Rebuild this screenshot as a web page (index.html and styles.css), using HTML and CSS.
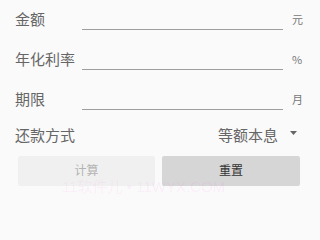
FILE: index.html
```html
<!DOCTYPE html>
<html lang="zh">
<head>
<meta charset="utf-8">
<link rel="stylesheet" href="styles.css">
</head>
<body>
<div class="page">
  <div class="row">
    <div class="label">金额</div>
    <div class="field"></div>
    <div class="unit">元</div>
  </div>
  <div class="row">
    <div class="label">年化利率</div>
    <div class="field"></div>
    <div class="unit">%</div>
  </div>
  <div class="row">
    <div class="label">期限</div>
    <div class="field"></div>
    <div class="unit">月</div>
  </div>
  <div class="row-select">
    <div class="label">还款方式</div>
    <div class="select">
      <span class="select-text">等额本息</span>
      <svg class="caret" width="7" height="4" viewBox="0 0 7 4"><polygon points="0,0 7,0 3.5,4" fill="#666"/></svg>
    </div>
  </div>
  <div class="buttons">
    <div class="btn btn-calc">计算</div>
    <div class="btn btn-reset">重置</div>
  </div>
  <div class="watermark">11软件儿 • 11WYX.COM</div>
</div>
</body>
</html>
```

FILE: styles.css
```css
html, body {
  margin: 0;
  padding: 0;
  background: #fafafa;
}
.page {
  position: relative;
  width: 315px;
  height: 204px;
  font-family: "Noto Sans CJK SC", "Noto Sans", sans-serif;
  color: #666;
}
.row {
  display: flex;
  align-items: flex-end;
  height: 30px;
  margin-bottom: 10px;
  padding-left: 15px;
}
.label {
  width: 67px;
  font-size: 15px;
  line-height: 20px;
  margin-bottom: 1px;
  color: #666;
}
.field {
  width: 201px;
  height: 29px;
  border-bottom: 1px solid #9e9e9e;
}
.unit {
  margin-left: 9px;
  font-size: 11px;
  line-height: 16px;
  margin-bottom: 3px;
  color: #777;
}
.row-select {
  display: flex;
  align-items: center;
  justify-content: space-between;
  height: 30px;
  margin-top: 2px;
  padding: 0 18px 0 15px;
}
.select {
  display: flex;
  align-items: center;
  gap: 12px;
}
.select-text {
  font-size: 15px;
  line-height: 20px;
  color: #666;
}
.caret {
  display: block;
  margin-top: -5px;
}
.buttons {
  display: flex;
  gap: 7px;
  margin-top: 6px;
  padding: 0 15px 0 18px;
}
.btn {
  height: 30px;
  display: flex;
  align-items: center;
  justify-content: center;
  font-size: 12px;
  line-height: 12px;
  padding-bottom: 2px;
  box-sizing: border-box;
  border-radius: 2px;
}
.btn-calc {
  width: 137px;
  background: #f0f0f0;
  color: #b3b3b3;
}
.btn-reset {
  width: 138px;
  background: #d6d6d6;
  color: #333;
}
.watermark {
  position: absolute;
  left: 62px;
  top: 182px;
  font-family: "Liberation Sans", Arial, "Noto Sans CJK SC", sans-serif;
  font-size: 15px;
  line-height: 10px;
  color: rgba(255, 80, 220, 0.08);
  white-space: nowrap;
}
```
